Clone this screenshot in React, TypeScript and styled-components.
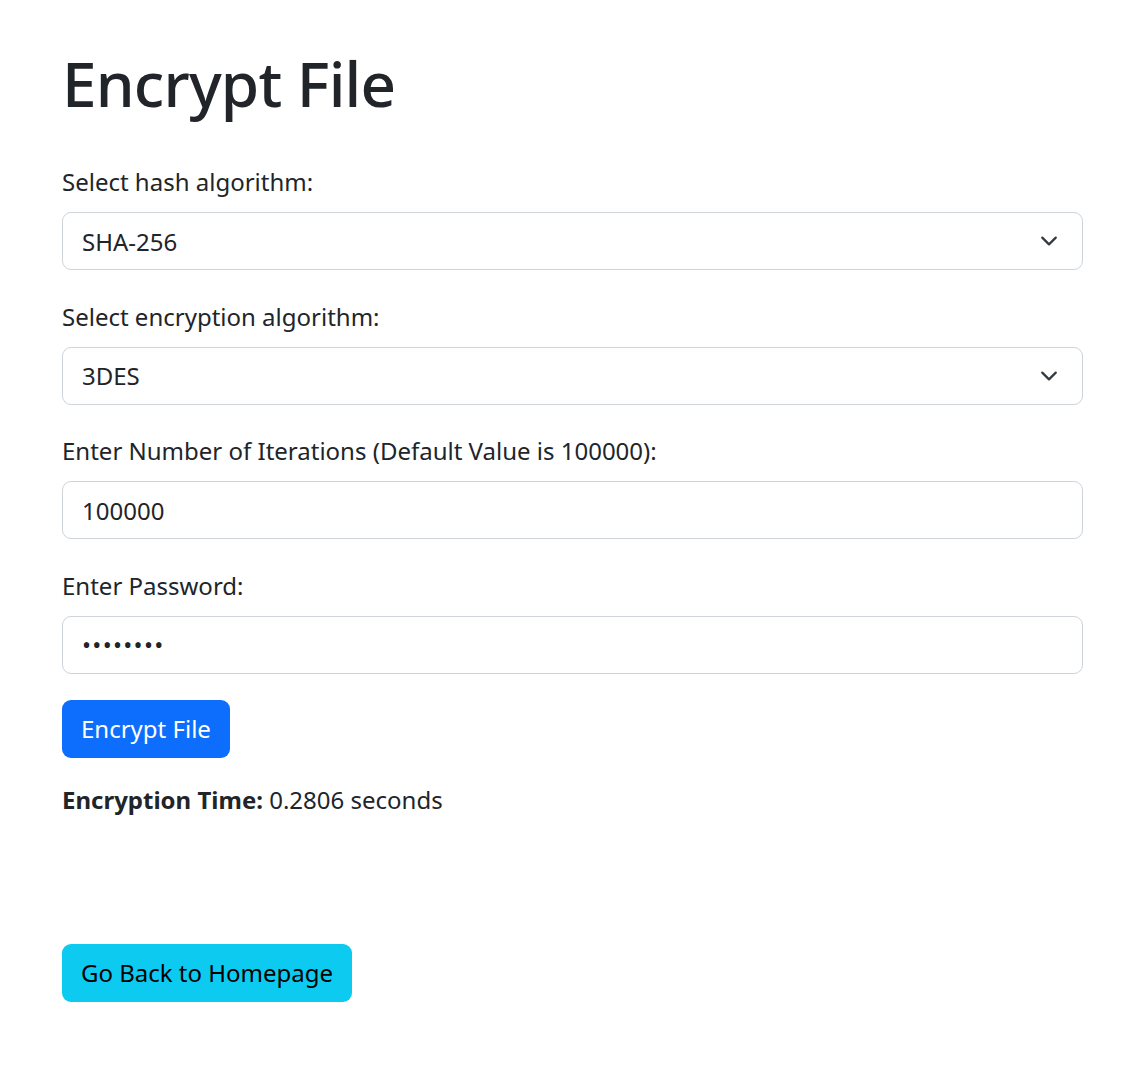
import React from 'react';
import styled, { createGlobalStyle } from 'styled-components';

const GlobalStyle = createGlobalStyle`
  body {
    margin: 0;
    background: #fff;
    color: #212529;
    font-family: "Noto Sans", "Open Sans", sans-serif;
  }
  *, *::before, *::after {
    box-sizing: border-box;
  }
`;

const Page = styled.div`
  padding: 46px 61px 60px 62px;
`;

const Title = styled.h1`
  margin: 0 0 44px;
  font-size: 62px;
  font-weight: 500;
  line-height: 74px;
  letter-spacing: -0.8px;
`;

const Field = styled.div<{ $last?: boolean }>`
  margin-bottom: ${p => (p.$last ? '26px' : '28.5px')};
`;

const Label = styled.label`
  display: block;
  margin-bottom: 12px;
  font-size: 24px;
  line-height: 36px;
`;

const Input = styled.input`
  display: block;
  width: 100%;
  height: 58px;
  padding: 9px 19px;
  font-family: inherit;
  font-size: 24px;
  color: #212529;
  background: #fff;
  border: 1.5px solid #ced4da;
  border-radius: 9px;
  outline: none;

  &[type='password'] {
    letter-spacing: 1.3px;
  }
`;

const Select = styled.select`
  display: block;
  width: 100%;
  height: 58px;
  padding: 9px 54px 9px 19px;
  font-family: inherit;
  font-size: 24px;
  color: #212529;
  border: 1.5px solid #ced4da;
  border-radius: 9px;
  appearance: none;
  background-color: #fff;
  background-image: url("data:image/svg+xml,%3csvg xmlns='http://www.w3.org/2000/svg' viewBox='0 0 16 16'%3e%3cpath fill='none' stroke='%23343a40' stroke-linecap='round' stroke-linejoin='round' stroke-width='2' d='m2 5 6 6 6-6'/%3e%3c/svg%3e");
  background-repeat: no-repeat;
  background-position: right 21px center;
  background-size: 24px 18px;
  outline: none;
`;

const Button = styled.button<{ $variant: 'primary' | 'info' }>`
  display: inline-block;
  height: 58px;
  padding: 0 19px;
  font-family: inherit;
  font-size: 24px;
  line-height: 36px;
  border: none;
  border-radius: 9px;
  cursor: pointer;
  color: ${p => (p.$variant === 'primary' ? '#fff' : '#000')};
  background: ${p => (p.$variant === 'primary' ? '#0d6efd' : '#0dcaf0')};
`;

const Result = styled.p`
  margin: 24px 0 126px;
  font-size: 24px;
  line-height: 36px;

  strong {
    font-weight: 700;
  }
`;

export default function App() {
  return (
    <>
      <GlobalStyle />
      <Page>
        <Title>Encrypt File</Title>
        <Field>
          <Label htmlFor="hash">Select hash algorithm:</Label>
          <Select id="hash" defaultValue="SHA-256">
            <option>SHA-256</option>
            <option>SHA-512</option>
          </Select>
        </Field>
        <Field>
          <Label htmlFor="enc">Select encryption algorithm:</Label>
          <Select id="enc" defaultValue="3DES">
            <option>AES</option>
            <option>3DES</option>
          </Select>
        </Field>
        <Field>
          <Label htmlFor="iter">Enter Number of Iterations (Default Value is 100000):</Label>
          <Input id="iter" type="number" defaultValue="100000" />
        </Field>
        <Field $last>
          <Label htmlFor="pw">Enter Password:</Label>
          <Input id="pw" type="password" defaultValue="password" />
        </Field>
        <div>
          <Button $variant="primary">Encrypt File</Button>
        </div>
        <Result>
          <strong>Encryption Time:</strong> 0.2806 seconds
        </Result>
        <Button $variant="info">Go Back to Homepage</Button>
      </Page>
    </>
  );
}
